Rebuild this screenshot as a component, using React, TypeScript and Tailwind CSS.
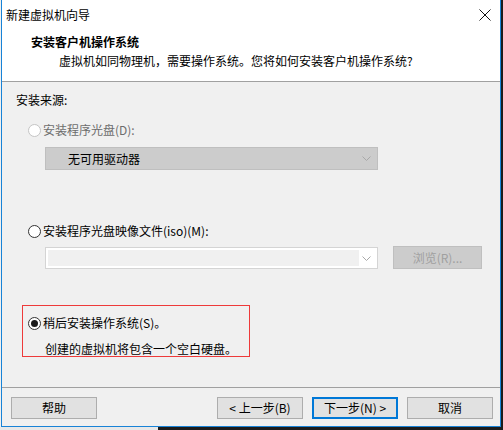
import React from "react";

const font = { fontFamily: '"Noto Sans CJK SC", "Noto Sans", sans-serif' };

const Radio = ({ checked = false, disabled = false }: { checked?: boolean; disabled?: boolean }) => (
  <svg width="13" height="13" viewBox="0 0 13 13" className="shrink-0">
    <circle cx="6.5" cy="6.5" r="6" fill="#fff" stroke={disabled ? "#c4c4c4" : "#333333"} strokeWidth="1" />
    {checked && <circle cx="6.5" cy="6.5" r="3.5" fill="#1a1a1a" />}
  </svg>
);

const Chevron = () => (
  <svg width="9" height="5" viewBox="0 0 9 5" className="shrink-0">
    <path d="M0.5 0.5 L4.5 4.5 L8.5 0.5" fill="none" stroke="#a8a8a8" strokeWidth="1" />
  </svg>
);

const WizardButton = ({ label, primary = false }: { label: string; primary?: boolean }) => (
  <button
    className={
      primary
        ? "w-[86px] h-[22px] bg-[#e1e1e1] border-2 border-[#0078d7] text-[12px] leading-[16px] text-black flex items-center justify-center"
        : "w-[86px] h-[22px] bg-[#e1e1e1] border border-[#adadad] text-[12px] leading-[16px] text-black flex items-center justify-center"
    }
  >
    {label}
  </button>
);

export default function App() {
  return (
    <div className="w-[503px] h-[430px] bg-[#1c1c1c] flex flex-col overflow-hidden" style={font}>
      <div className="flex h-[427px]">
        <div className="w-[1px] bg-[#f0f0f0]" />
        {/* window */}
        <div className="w-[500px] h-[427px] flex flex-col border-l border-r border-b border-[#1883d7] bg-white">
          {/* title bar */}
          <div className="h-[30px] flex items-center justify-between pl-[4px] pr-[9px] bg-white">
            <span className="text-[12px] leading-[16px] text-black">新建虚拟机向导</span>
            <svg width="12" height="12" viewBox="0 0 12 12">
              <path d="M0.5 0.5 L11.5 11.5 M11.5 0.5 L0.5 11.5" stroke="#111" strokeWidth="1" />
            </svg>
          </div>

          {/* header */}
          <div className="h-[52px] bg-white border-b border-[#a0a0a0] pl-[29px] pt-[4px] flex flex-col">
            <span className="text-[12px] leading-[16px] font-bold text-black">安装客户机操作系统</span>
            <span className="mt-[3px] ml-[28px] text-[12px] leading-[16px] text-black">
              虚拟机如同物理机，需要操作系统。您将如何安装客户机操作系统?
            </span>
          </div>

          {/* body */}
          <div className="h-[306px] bg-[#f0f0f0] border-b border-[#a0a0a0] pl-[14px] pt-[10px] flex flex-col">
            <span className="text-[12px] leading-[16px] text-black">安装来源:</span>

            <label className="mt-[14px] ml-[12px] flex items-center gap-[2px] h-[16px]">
              <Radio disabled />
              <span className="text-[12px] leading-[16px] text-[#6d6d6d]">安装程序光盘(D):</span>
            </label>

            <div className="mt-[9px] ml-[29px] w-[333px] h-[23px] bg-[#cccccc] border border-[#bfbfbf] flex items-center justify-between pl-[22px] pr-[6px]">
              <span className="text-[12px] leading-[16px] text-black">无可用驱动器</span>
              <Chevron />
            </div>

            <label className="mt-[53px] ml-[12px] flex items-center gap-[2px] h-[16px]">
              <Radio />
              <span className="text-[12px] leading-[16px] text-black">安装程序光盘映像文件(iso)(M):</span>
            </label>

            <div className="mt-[7px] ml-[29px] flex items-start gap-[15px]">
              <div className="mt-[1px] w-[333px] h-[22px] bg-white border border-[#d4d4d4] flex items-center p-[2px] pr-[6px]">
                <div className="flex-1 h-full bg-[#f0f0f0]" />
                <div className="w-[12px] flex justify-end">
                  <Chevron />
                </div>
              </div>
              <button className="w-[89px] h-[23px] bg-[#cccccc] border border-[#bfbfbf] text-[12px] leading-[16px] text-[#a0a0a0] flex items-center justify-center">
                浏览(R)...
              </button>
            </div>

            <div className="mt-[36px] ml-[6px] w-[228px] h-[52px] border border-[#ee3a3a] pl-[5px] pt-[9px] flex flex-col">
              <label className="flex items-center gap-[2px] h-[16px]">
                <Radio checked />
                <span className="text-[12px] leading-[16px] text-black">稍后安装操作系统(S)。</span>
              </label>
              <span className="mt-[10px] ml-[17px] text-[12px] leading-[16px] text-black">
                创建的虚拟机将包含一个空白硬盘。
              </span>
            </div>
          </div>

          {/* footer */}
          <div className="flex-1 bg-[#f0f0f0] pl-[9px] pr-[7px] pt-[9px] flex items-start justify-between">
            <WizardButton label="帮助" />
            <div className="flex gap-[9px]">
              <div className="flex gap-[9px]">
                <WizardButton label="< 上一步(B)" />
                <WizardButton label="下一步(N) >" primary />
              </div>
              <WizardButton label="取消" />
            </div>
          </div>
        </div>
        <div className="flex-1 bg-[#1c1c1c]" />
      </div>
      <div className="h-[3px] flex">
        <div className="w-[158px] bg-[#e8e8e8]" />
        <div className="flex-1 bg-[#1c1c1c]" />
      </div>
    </div>
  );
}
